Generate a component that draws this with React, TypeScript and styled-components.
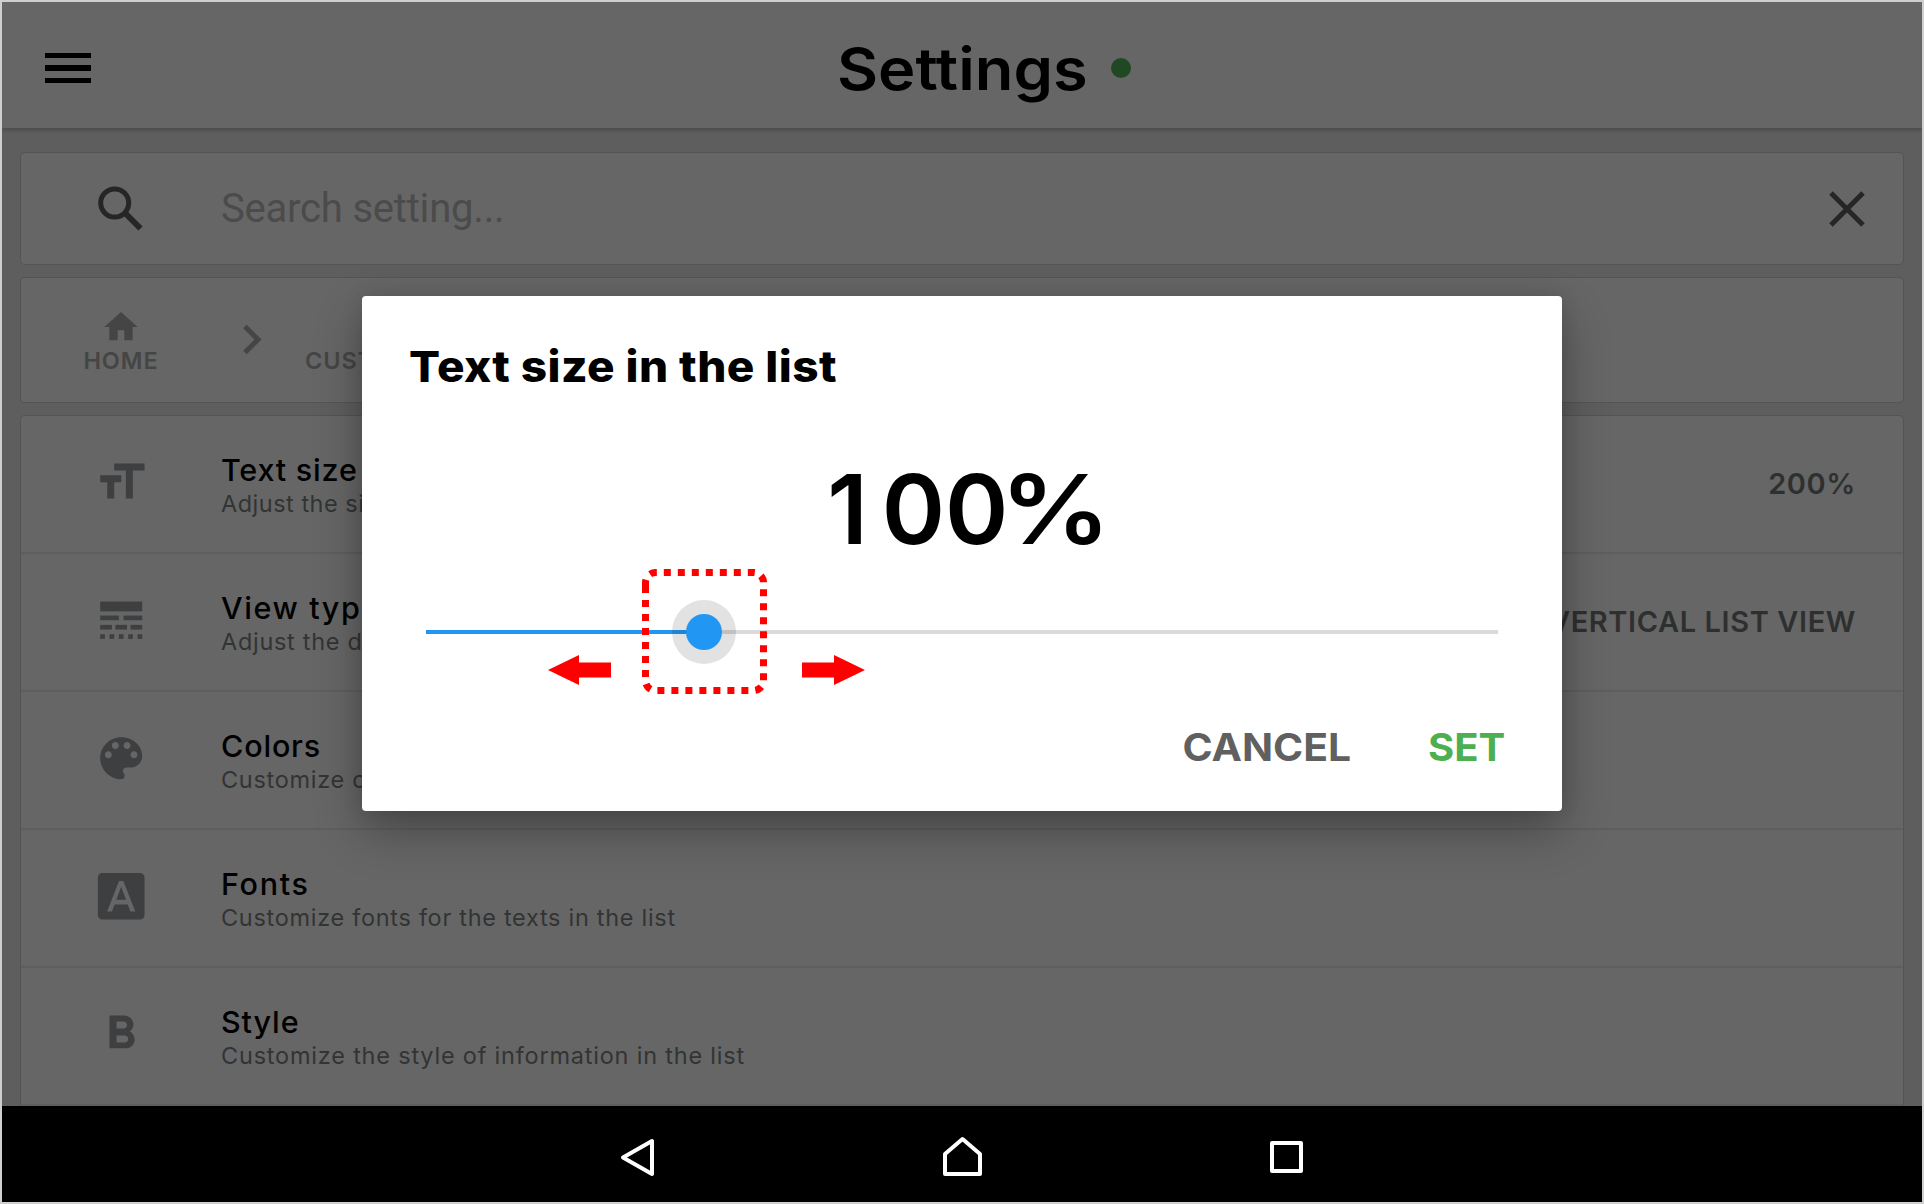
import React from 'react';
import styled, { createGlobalStyle } from 'styled-components';

const Global = createGlobalStyle`
  * { box-sizing: border-box; }
  html, body { margin: 0; overflow: hidden; }
  body { font-family: Inter, "Liberation Sans", sans-serif; color: #000; }
`;

const Screen = styled.div`
  position: relative;
  width: 1924px;
  height: 1204px;
  border: 2px solid #cfcfcf;
  background: #5e5e5e;
  display: flex;
  flex-direction: column;
  overflow: hidden;
`;

const Header = styled.header`
  flex: none;
  height: 126px;
  padding: 0 43px;
  background: #666;
  box-shadow: 0 1px 4px 1px rgba(0, 0, 0, 0.22);
  display: grid;
  grid-template-columns: 50px 1fr 50px;
  align-items: center;
`;

const Burger = styled.div`
  width: 46px;
  display: grid;
  gap: 7px;
  margin-top: 6px;
`;

const BurgerLine = styled.span`
  height: 5.4px;
  background: #000;
`;

const TitleGroup = styled.div`
  display: flex;
  justify-content: center;
  align-items: center;
  gap: 44px;
  padding: 7px 0 0 44px;
`;

const Title = styled.h1`
  margin: 0;
  font-size: 58px;
  line-height: 70px;
  font-weight: 600;
  transform: scaleX(1.09);
  transform-origin: left;
`;

const StatusDot = styled.span`
  width: 20px;
  height: 20px;
  margin-top: -1px;
  border-radius: 50%;
  background: #204923;
`;

const Content = styled.main`
  flex: 1;
  min-height: 0;
  padding: 25px 19px 0 19px;
  display: flex;
  flex-direction: column;
  gap: 14px;
  overflow: hidden;
`;

const Card = styled.section<{ $height: number }>`
  flex: none;
  height: ${(p) => p.$height}px;
  background: #666;
  border-radius: 4px;
  box-shadow: 0 0 0 1px #545454;
  display: flex;
`;

const SearchCard = styled(Card)`
  align-items: center;
  padding: 0 35px 0 75px;
`;

const SearchText = styled.span`
  flex: 1;
  padding-left: 75px;
  font-family: Roboto, sans-serif;
  font-size: 40px;
  line-height: 48px;
  letter-spacing: -0.2px;
  color: #4b4b4b;
`;

const Crumb = styled.div<{ $width: number; $justify?: string }>`
  width: ${(p) => p.$width}px;
  display: flex;
  flex-direction: column;
  align-items: ${(p) => p.$justify ?? 'center'};
  justify-content: flex-end;
  padding-bottom: 27px;
  font-size: 23.5px;
  line-height: 28px;
  font-weight: 600;
  letter-spacing: 0.9px;
  color: #454545;
`;

const CrumbArrow = styled.div`
  width: 84px;
  padding-right: 23px;
  display: flex;
  align-items: center;
  justify-content: center;
`;

const ListCard = styled(Card)`
  flex-direction: column;
  border-radius: 4px 4px 0 0;
`;

const Row = styled.div`
  flex: none;
  height: 138px;
  display: flex;
  align-items: center;
  padding: 0 48px 0 75px;
  border-bottom: 2px solid #5e5e5e;
`;

const RowIcon = styled.div`
  width: 125px;
  height: 56px;
  display: flex;
  align-items: center;
  margin-top: -4px;
`;

const RowText = styled.div`
  flex: 1;
  display: flex;
  flex-direction: column;
  padding-top: 2px;
`;

const RowTitle = styled.span<{ $spacing: number }>`
  font-size: 30.5px;
  line-height: 37px;
  font-weight: 500;
  letter-spacing: ${(p) => p.$spacing}px;
`;

const RowDetail = styled.span<{ $spacing: number }>`
  font-size: 23.5px;
  line-height: 31px;
  color: #323434;
  letter-spacing: ${(p) => p.$spacing}px;
`;

const RowValue = styled.span`
  font-size: 29px;
  font-weight: 600;
  color: #2e3030;
  letter-spacing: 0.6px;
  margin: -2px -1px 0 0;
`;

const NavBar = styled.nav`
  flex: none;
  height: 96px;
  background: #000;
  display: flex;
  justify-content: center;
  align-items: center;
  gap: 284px;
  padding-top: 6px;
  z-index: 1;
`;

const Dialog = styled.div`
  position: absolute;
  left: 360px;
  top: 294px;
  width: 1200px;
  height: 515px;
  border-radius: 4px;
  background: #fff;
  box-shadow: 0 20px 48px rgba(0, 0, 0, 0.3), 0 0 20px rgba(0, 0, 0, 0.1);
  display: flex;
  flex-direction: column;
`;

const DialogTitle = styled.h2`
  margin: 44px 0 0 47px;
  font-size: 43px;
  line-height: 52px;
  font-weight: 800;
  letter-spacing: 0.4px;
  transform: scaleX(1.068);
  transform-origin: left;
`;

const Amount = styled.div`
  margin-top: 59px;
  display: flex;
  justify-content: center;
  font-size: 96px;
  line-height: 116px;
  font-weight: 600;
`;

const LeadDigit = styled.span`
  margin-right: 14px;
`;

const Percent = styled.span`
  margin-left: -8px;
  transform: scaleX(1.15);
  transform-origin: left;
`;

const Slider = styled.div`
  position: relative;
  margin: 63px 64px 0;
  height: 4px;
  display: flex;
  background: #dadada;
`;

const SliderFill = styled.div`
  width: 278px;
  background: #2196f3;
`;

const Halo = styled.div`
  position: absolute;
  left: 246px;
  top: -30px;
  width: 64px;
  height: 64px;
  border-radius: 50%;
  background: rgba(0, 0, 0, 0.115);
  display: flex;
  align-items: center;
  justify-content: center;
`;

const Thumb = styled.div`
  width: 36px;
  height: 36px;
  border-radius: 50%;
  background: #2196f3;
`;

const Marker = styled.svg<{ $x: number; $y: number }>`
  position: absolute;
  left: ${(p) => p.$x}px;
  top: ${(p) => p.$y}px;
`;

const Actions = styled.div`
  margin-top: auto;
  padding: 0 57px 41px 0;
  display: flex;
  justify-content: flex-end;
  gap: 80px;
`;

const Action = styled.button<{ $color: string; $stretch: number }>`
  border: 0;
  padding: 0;
  background: none;
  font: 700 38.5px/46px Inter, sans-serif;
  color: ${(p) => p.$color};
  transform: scaleX(${(p) => p.$stretch});
  transform-origin: right;
`;

const iconPaths = {
  size: 'M9 4v3h5v12h3V7h5V4H9zm-6 8h3v7h3v-7h3V9H3v3z',
  palette:
    'M12 3c-4.970 0-9 4.030-9 9s4.030 9 9 9c.830 0 1.500-.670 1.500-1.500 0-.390-.150-.740-.390-1.010-.230-.260-.380-.610-.380-.990 0-.830.670-1.500 1.500-1.500H16c2.760 0 5-2.240 5-5 0-4.420-4.030-8-9-8zm-5.500 9c-.830 0-1.500-.670-1.500-1.500S5.670 9 6.500 9 8 9.670 8 10.500 7.330 12 6.500 12zm3-4C8.670 8 8 7.330 8 6.500S8.670 5 9.500 5s1.500.670 1.500 1.500S10.330 8 9.500 8zm5 0c-.830 0-1.500-.670-1.500-1.500S13.670 5 14.500 5s1.500.670 1.500 1.500S15.330 8 14.500 8zm3 4c-.830 0-1.500-.670-1.500-1.500S16.670 9 17.500 9s1.500.670 1.500 1.500-.670 1.500-1.500 1.500z',
  font: 'M9.930 13.500h4.140L12 7.980zM20 2H4c-1.100 0-2 .9-2 2v16c0 1.100.9 2 2 2h16c1.100 0 2-.9 2-2V4c0-1.100-.9-2-2-2zm-4.050 16.500l-1.140-3H9.170l-1.120 3H5.960l5.110-13h1.860l5.110 13h-2.090z',
  bold: 'M15.600 10.790c.970-.670 1.650-1.770 1.650-2.790 0-2.260-1.750-4-4-4H7v14h7.040c2.090 0 3.710-1.700 3.710-3.790 0-1.520-.860-2.820-2.150-3.420zM10 6.500h3c.830 0 1.500.670 1.500 1.500s-.670 1.500-1.500 1.500h-3v-3zm3.500 9H10v-3h3.500c.830 0 1.500.670 1.500 1.500s-.670 1.500-1.500 1.500z',
};

type IconName = keyof typeof iconPaths | 'view';

// Line-style icon: one solid bar over three rows of ever shorter dashes.
const viewBars: [number, number, number, number][] = [
  [3, 4, 18, 4.2],
  [3, 10, 8, 2],
  [13, 10, 8, 2],
  [3, 14, 5, 2],
  [9.5, 14, 5, 2],
  [16, 14, 5, 2],
  [3, 18, 2, 2],
  [7, 18, 2, 2],
  [11, 18, 2, 2],
  [15, 18, 2, 2],
  [19, 18, 2, 2],
];

function Icon({ name }: { name: IconName }) {
  return (
    <svg width="56" height="56" viewBox="0 0 24 24" fill="#3e3f40">
      <g transform="translate(-1.2 .1)">
        {name === 'view' ? (
          viewBars.map(([x, y, w, h]) => <rect key={`${x}-${y}`} x={x} y={y} width={w} height={h} />)
        ) : (
          <path d={iconPaths[name]} />
        )}
      </g>
    </svg>
  );
}

type RowData = {
  icon: IconName;
  title: string;
  spacing: number;
  detail: string;
  detailSpacing: number;
  value?: string;
};

const rows: RowData[] = [
  { icon: 'size', title: 'Text size', spacing: 0.8, detail: 'Adjust the size', detailSpacing: 0.5, value: '200%' },
  { icon: 'view', title: 'View type', spacing: 1.6, detail: 'Adjust the display', detailSpacing: 0.7, value: 'VERTICAL LIST VIEW' },
  { icon: 'palette', title: 'Colors', spacing: 0.8, detail: 'Customize colors', detailSpacing: 0.7 },
  { icon: 'font', title: 'Fonts', spacing: 1.7, detail: 'Customize fonts for the texts in the list', detailSpacing: 0.7 },
  { icon: 'bold', title: 'Style', spacing: 0.9, detail: 'Customize the style of information in the list', detailSpacing: 0.79 },
];

export default function App() {
  return (
    <>
      <Global />
      <Screen>
        <Header>
          <Burger>
            <BurgerLine />
            <BurgerLine />
            <BurgerLine />
          </Burger>
          <TitleGroup>
            <Title>Settings</Title>
            <StatusDot />
          </TitleGroup>
        </Header>
        <Content>
          <SearchCard $height={111}>
            <svg width="50" height="50" viewBox="0 0 50 50" fill="none" stroke="#262626" strokeWidth="5">
              <circle cx="18.700" cy="19" r="14" />
              <path d="M29.500 29.500L44.500 44.500" strokeWidth="6" />
            </svg>
            <SearchText>Search setting...</SearchText>
            <svg width="42" height="42" viewBox="0 0 42 42" fill="none" stroke="#262626" strokeWidth="5">
              <path d="M5 5L37 37M37 5L5 37" />
            </svg>
          </SearchCard>
          <Card $height={124}>
            <Crumb $width={200}>
              <svg width="40" height="40" viewBox="0 0 24 24" fill="#454545">
                <path d="M10 20v-6h4v6h5v-8h3L12 3 2 12h3v8z" />
              </svg>
              HOME
            </Crumb>
            <CrumbArrow>
              <svg width="24" height="40" viewBox="0 0 24 40" fill="none" stroke="#454545" strokeWidth="5">
                <path d="M5 6.500L18 19.500L5 32.500" />
              </svg>
            </CrumbArrow>
            <Crumb $width={300} $justify="flex-start">CUST</Crumb>
          </Card>
          <ListCard $height={700}>
            {rows.map((r) => (
              <Row key={r.title}>
                <RowIcon>
                  <Icon name={r.icon} />
                </RowIcon>
                <RowText>
                  <RowTitle $spacing={r.spacing}>{r.title}</RowTitle>
                  <RowDetail $spacing={r.detailSpacing}>{r.detail}</RowDetail>
                </RowText>
                {r.value && <RowValue>{r.value}</RowValue>}
              </Row>
            ))}
          </ListCard>
        </Content>
        <NavBar>
          <svg width="40" height="44" viewBox="0 0 40 44" fill="none" stroke="#fff" strokeWidth="4" strokeLinejoin="round">
            <path d="M34 6V39L5 22.500Z" />
          </svg>
          <svg width="40" height="44" viewBox="0 0 40 44" fill="none" stroke="#fff" strokeWidth="4" strokeLinejoin="round">
            <path d="M20.500 4L38 19V39H3V19Z" />
          </svg>
          <svg width="40" height="44" viewBox="0 0 40 44" fill="none" stroke="#fff" strokeWidth="4" strokeLinejoin="round">
            <path d="M6 8H35V36H6Z" />
          </svg>
        </NavBar>
        <Dialog>
          <DialogTitle>Text size in the list</DialogTitle>
          <Amount>
            <LeadDigit>1</LeadDigit>
            <span>00</span>
            <Percent>%</Percent>
          </Amount>
          <Slider>
            <SliderFill />
            <Halo>
              <Thumb />
            </Halo>
          </Slider>
          <Actions>
            <Action $color="#606060" $stretch={1.06}>CANCEL</Action>
            <Action $color="#4caf50" $stretch={1.04}>SET</Action>
          </Actions>
          <Marker $x={280} $y={273} width="126" height="126" fill="none" stroke="#f00" strokeWidth="7">
            <path
              d="M3.500 17V111.500A10 10 0 0 0 13.500 121.500H111.500A10 10 0 0 0 121.500 111.500V13.500A10 10 0 0 0 111.500 3.500H13.500A10 10 0 0 0 3.500 13.500V17"
              strokeDasharray="7 7"
            />
          </Marker>
          <Marker $x={186} $y={359} width="63" height="30" fill="#f00">
            <path d="M0 15L31 0V7.500H63V22.500H31V30Z" />
          </Marker>
          <Marker $x={440} $y={359} width="63" height="30" fill="#f00">
            <path d="M63 15L32 0V7.500H0V22.500H32V30Z" />
          </Marker>
        </Dialog>
      </Screen>
    </>
  );
}
